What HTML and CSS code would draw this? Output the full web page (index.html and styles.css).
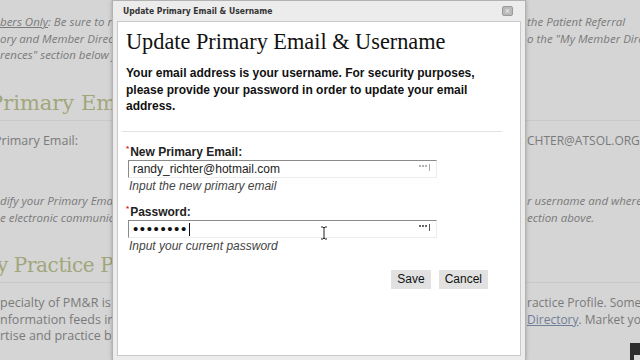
FILE: index.html
```html
<!DOCTYPE html>
<html lang="en">
<head>
  <meta charset="UTF-8" />
  <meta name="viewport" content="width=device-width, initial-scale=1.0"/>
  <title>My Profile</title>
  <link rel="stylesheet" href="styles.css">
</head>
<body>

  <div class="page">
    <div class="row note">
      <div><u>bers Only</u>: Be sure to review your listing in</div>
      <div>the Patient Referral</div>
    </div>
    <div class="row note">
      <div>ory and Member Directory settings</div>
      <div>o the "My Member Directory</div>
    </div>
    <div class="row note">
      <div>rences" section below for more</div>
      <div></div>
    </div>

    <h2 class="section-title">Primary Email</h2>
    <div class="row text first">
      <div class="cut">Primary Email:</div>
      <div>CHTER@ATSOL.ORG</div>
    </div>
    <div class="row note gap">
      <div>dify your Primary Email address</div>
      <div>r username and where you</div>
    </div>
    <div class="row note">
      <div>e electronic communications</div>
      <div>ection above.</div>
    </div>

    <h2 class="section-title second">y Practice Profile</h2>
    <div class="row text first">
      <div>pecialty of PM&amp;R is d</div>
      <div>ractice Profile. Some</div>
    </div>
    <div class="row text">
      <div>nformation feeds into</div>
      <div><a href="#">Directory</a>. Market your</div>
    </div>
    <div class="row text">
      <div>rtise and practice by</div>
      <div></div>
    </div>
    <div class="page-actions">
      <button class="dark-btn"><span></span></button>
    </div>
  </div>

  <div class="dialog">
    <div class="titlebar">
      <span>Update Primary Email &amp; Username</span>
      <button class="close">&times;</button>
    </div>
    <div class="dialog-body">
      <h1>Update Primary Email &amp; Username</h1>
      <p class="intro">Your email address is your username. For security purposes, please provide your password in order to update your email address.</p>
      <hr>

      <div class="field">
        <label><span class="req">*</span>New Primary Email:</label>
        <div class="input-wrap">
          <input type="text" value="randy_richter@hotmail.com">
          <span class="pm"><i></i><i></i><i></i></span>
        </div>
        <div class="hint">Input the new primary email</div>
      </div>

      <div class="field">
        <label><span class="req">*</span>Password:</label>
        <div class="input-wrap">
          <input type="password" value="password">
          <span class="caret"></span>
          <span class="pm dark"><i></i><i></i><i></i></span>
        </div>
        <div class="hint">Input your current password</div>
      </div>

      <div class="actions">
        <button>Save</button>
        <button>Cancel</button>
      </div>
    </div>

    <svg class="ibeam" width="8" height="14" viewBox="0 0 8 14">
      <path d="M1 1h2l1 1l1-1h2M4 2v10M1 13h2l1-1l1 1h2" fill="none" stroke="#222" stroke-width="1"/>
    </svg>
  </div>

</body>
</html>
```

FILE: styles.css
```css
* {
  box-sizing: border-box;
}
body {
  margin: 0;
  width: 640px;
  height: 360px;
  overflow: hidden;
  background: #d5d5d5;
  font-family: 'Open Sans', sans-serif;
  color: #7a7a7a;
}
.page {
  padding-top: 14px;
}
.row {
  display: grid;
  grid-template-columns: 112px 415px 113px;
  font-size: 11.5px;
  line-height: 16.5px;
}
.row div {
  white-space: nowrap;
  overflow: hidden;
}
.row div:last-child {
  grid-column: 3;
}
.note {
  font-style: italic;
}
.text {
  font-size: 12.5px;
}
.text div:last-child {
  font-size: 12px;
}
.cut {
  text-indent: -6px;
}
.row.first {
  margin-top: 12px;
}
.row.gap {
  margin-top: 44px;
}
.row a {
  color: #6f7f98;
}
.section-title {
  margin: 24px 0 0;
  padding-bottom: 2px;
  font-family: 'DejaVu Serif', serif;
  font-weight: normal;
  font-size: 21px;
  line-height: 30px;
  color: #a2a67b;
  white-space: nowrap;
  text-indent: -11px;
  border-bottom: 1px solid #c9c9c9;
}
.section-title.second {
  font-size: 20px;
  letter-spacing: -0.4px;
  text-indent: -3px;
}
.page-actions {
  display: flex;
  justify-content: flex-end;
  margin-right: -40px;
  margin-top: -2px;
}
.dark-btn {
  width: 50px;
  height: 26px;
  border: none;
  background: #2e2e2e;
  padding: 6px 0 0 4px;
  text-align: left;
}
.dark-btn span {
  display: block;
  width: 8px;
  height: 8px;
  background: #d8d8d8;
}

/* dialog */
.dialog {
  position: absolute;
  left: 112px;
  top: 0;
  width: 414px;
  height: 361px;
  background: #ececec;
  border: 1px solid #b2b2b2;
  padding: 0 4px 4px;
  box-shadow: 0 0 4px rgba(0,0,0,0.25);
  display: flex;
  flex-direction: column;
}
.titlebar {
  height: 20px;
  display: flex;
  align-items: center;
  justify-content: space-between;
  padding: 0 4px 0 6px;
  font-family: 'DejaVu Sans Condensed', 'DejaVu Sans', sans-serif;
  font-stretch: condensed;
  font-weight: bold;
  font-size: 8.5px;
  color: #333;
}
.close {
  width: 11px;
  height: 10px;
  padding: 0;
  margin-right: 4px;
  border: 1px solid #9a9a9a;
  border-radius: 2px;
  background: #b9b9b9;
  color: #eee;
  font-size: 9px;
  line-height: 7px;
}
.dialog-body {
  flex: 1;
  background: white;
  border: 1px solid #c9c9c9;
  padding: 6px 0 0 8px;
  font-family: 'Liberation Sans', Arial, sans-serif;
  color: #111;
}
h1 {
  margin: 0;
  font-family: 'Liberation Serif', serif;
  font-weight: normal;
  font-size: 22.3px;
  line-height: 28px;
  color: #111;
}
.intro {
  margin: 9px 20px 0 0;
  font-weight: bold;
  font-size: 12px;
  line-height: 16.5px;
}
hr {
  margin: 16px 18px 0 -4px;
  border: none;
  border-top: 1px solid #e2e2e2;
}
.field {
  margin-top: 13px;
}
.field + .field {
  margin-top: 12px;
}
label {
  display: block;
  font-weight: bold;
  font-size: 12px;
  line-height: 14px;
  color: #222;
}
.req {
  color: #d22;
  font-size: 8px;
  vertical-align: top;
  position: relative;
  top: -3px;
  margin-right: 1px;
}
.input-wrap {
  position: relative;
  margin: 1px 0 0 2px;
  width: 309px;
}
.input-wrap input {
  display: block;
  width: 309px;
  height: 18px;
  padding: 0 4px;
  border: 1px solid #ececec;
  border-top-color: #8a8a8a;
  border-left-color: #8a8a8a;
  font-family: 'Liberation Sans', Arial, sans-serif;
  font-size: 12px;
  color: #222;
  outline: none;
}
.input-wrap input[type=password] {
  font-size: 15px;
  letter-spacing: 1.6px;
  color: #111;
}
.caret {
  position: absolute;
  left: 61px;
  top: 3px;
  width: 1px;
  height: 13px;
  background: #111;
}
.pm {
  position: absolute;
  right: 7px;
  top: 4px;
  display: flex;
  align-items: flex-start;
  gap: 1px;
  height: 7px;
  padding-right: 2px;
  border-right: 1px solid #aaa;
}
.pm i {
  display: block;
  width: 2px;
  height: 2px;
  margin-top: 1px;
  border-radius: 1px;
  background: #999;
}
.pm.dark i {
  background: #333;
}
.pm.dark {
  border-right-color: #555;
}
.hint {
  margin: 1px 0 0 3px;
  font-style: italic;
  font-size: 12px;
  line-height: 14px;
  color: #444;
}
.actions {
  display: flex;
  justify-content: flex-end;
  gap: 8px;
  margin: 17px 32px 0 0;
}
.actions button {
  height: 19px;
  padding: 0 6px;
  border: none;
  background: #e1e1e1;
  font-family: 'Liberation Sans', Arial, sans-serif;
  font-size: 12px;
  color: #111;
}
.ibeam {
  position: absolute;
  left: 207px;
  top: 225px;
}
```
